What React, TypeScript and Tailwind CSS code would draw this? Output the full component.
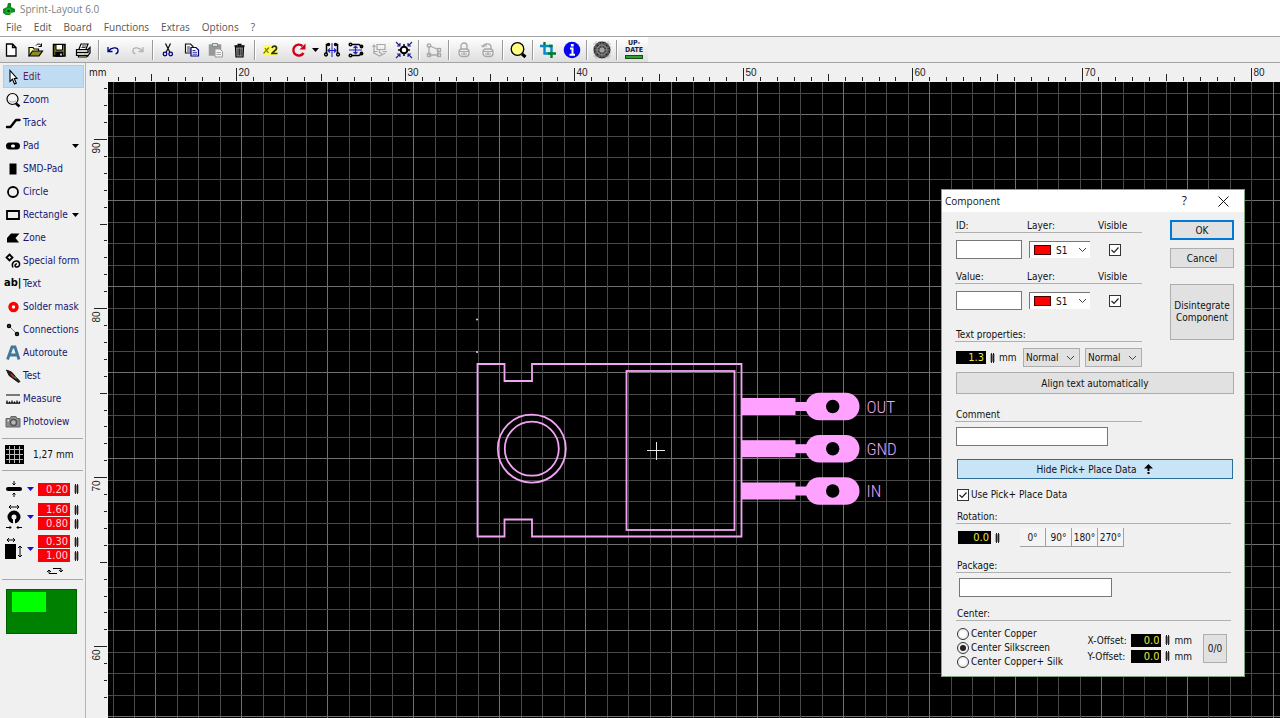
// Board editor shell: menu, toolbar, tool list, rulers, canvas and the
// component dialog floating over it.
import { useEffect, useState, type ReactNode } from "react";

// canvas scale, in pixels
const MM = 16.91;
const GRID = 21.49;

const menus = ["File", "Edit", "Board", "Functions", "Extras", "Options", "?"];

/* ---------- icons ---------- */

function Icon({ children, size = 18 }: { children: ReactNode; size?: number }) {
  return (
    <svg width={size} height={size} viewBox="0 0 18 18" fill="none" stroke="#000" strokeWidth="1.5" className="shrink-0" aria-hidden="true">
      {children}
    </svg>
  );
}

const Down = ({ color = "#000" }: { color?: string }) => (
  <svg width="7" height="4" viewBox="0 0 7 4" className="shrink-0" aria-hidden="true">
    <path d="M0 0h7L3.5 4z" fill={color} />
  </svg>
);

const Chevron = () => (
  <svg width="9" height="6" viewBox="0 0 9 6" fill="none" stroke="#444" className="pointer-events-none shrink-0" aria-hidden="true">
    <path d="M1 1l3.5 3.5L8 1" />
  </svg>
);

const Spin = () => (
  <svg width="5" height="10" viewBox="0 0 5 10" className="shrink-0" aria-hidden="true">
    <rect x="0" y="1" width="5" height="8" fill="#aaa" />
    <rect x="1" y="0" width="1" height="10" fill="#222" />
    <rect x="3" y="0" width="1" height="10" fill="#222" />
    <rect x="2" y="2" width="1" height="6" fill="#777" />
  </svg>
);

type Tool = { name: string; icon: ReactNode; wide?: boolean; drop?: boolean };

const toolbar: Tool[][] = [
  [
    { name: "New", icon: <path d="M3.500 3h6l3.500 3.500V15H3.500zM9.500 3v3.500H13" fill="#fff" strokeWidth="1.300" /> },
    {
      name: "Open",
      icon: (
        <>
          <path d="M2 15V6.500h4l1 1.500h4.500v2.500" fill="#ffff9c" strokeWidth="1.200" />
          <path d="M2 15l3.500-5h10L12 15z" fill="#8c8c20" strokeWidth="1.200" />
          <path d="M9 4.500c1.500-2 4-2 5.500.5m0-2.500V5.500h-3" strokeWidth="1" />
        </>
      ),
    },
    {
      name: "Save",
      icon: (
        <>
          <path d="M2.500 3.500H14V15H2.500z" fill="#7d7d1d" />
          <path d="M5 3.500h6.500V9H5z" fill="#fff" strokeWidth="1" />
          <path d="M5 11.500h6.500V15H5z" fill="#000" />
          <path d="M10 12.500v2" stroke="#fff" />
        </>
      ),
    },
    {
      name: "Print",
      icon: (
        <>
          <path d="M4 8l2-5h7l-2 5" fill="#fff" strokeWidth="1.200" />
          <path d="M7 5h4M6.500 6.500h4" strokeWidth=".8" />
          <path d="M1.500 8.500H13l2-2v5.500l-2 2.500H1.500z" fill="#ccc" strokeWidth="1.200" />
          <path d="M1.500 11.500H13v-3M3.500 14.500v1.500h8l2-1.500" strokeWidth="1.200" />
          <path d="M9 13h2" stroke="#cc0" />
        </>
      ),
    },
  ],
  [
    { name: "Undo", icon: <path d="M3 6v4.500h4.500M3.500 10C6 6.500 12.500 5.500 13 9c.3 2-1 3.500-2.500 4" stroke="#000080" strokeWidth="1.300" /> },
    { name: "Redo", icon: <path d="M14 6v4.500H9.500M13.500 10C11 6.500 4.500 5.500 4 9c-.3 2 1 3.500 2.500 4" stroke="#b4b4b4" strokeWidth="1.300" /> },
  ],
  [
    {
      name: "Cut",
      icon: (
        <>
          <path d="M6.500 2.500l4.500 9M11.500 2.500L7 11.500" stroke="#111" strokeWidth="1.300" />
          <circle cx="6" cy="13" r="1.800" stroke="#000080" strokeWidth="1.300" />
          <circle cx="11.700" cy="13" r="1.800" stroke="#000080" strokeWidth="1.300" />
        </>
      ),
    },
    {
      name: "Copy",
      icon: (
        <>
          <path d="M2.500 3h5l2.500 2.500V12H2.500z" fill="#fff" stroke="#111" strokeWidth="1.200" />
          <path d="M4 6h3M4 8h4M4 10h4" strokeWidth=".8" />
          <path d="M8 6.500h5l2.500 2.500v6H8z" fill="#fff" stroke="#000080" strokeWidth="1.200" />
          <path d="M9.500 9.500h3M9.500 11.300h4.500M9.500 13.200h4.500" stroke="#000080" strokeWidth=".8" />
        </>
      ),
    },
    {
      name: "Paste",
      icon: (
        <>
          <path d="M2.500 4h11v10h-11z" fill="#999" stroke="#999" />
          <path d="M5.500 2.500h5v3h-5z" fill="#ddd" stroke="#888" strokeWidth="1" />
          <path d="M8 8h5l2.500 2.500V16H8z" fill="#f4f4f4" stroke="#999" strokeWidth="1" />
          <path d="M9.500 11.500h4.500M9.500 13.500h4.500" stroke="#999" strokeWidth=".8" />
        </>
      ),
    },
    {
      name: "Delete",
      icon: (
        <>
          <path d="M4.500 6h8L12 16H5z" fill="#999" strokeWidth="1.200" />
          <path d="M3.500 5h10" strokeWidth="1.600" />
          <path d="M6.500 3.500h4" strokeWidth="1.500" />
          <path d="M7 7.500V14.500M8.600 7.500V14.500M10.200 7.500V14.500" strokeWidth=".8" />
        </>
      ),
    },
  ],
  [
    {
      name: "Duplicate",
      wide: true,
      icon: (
        <>
          <rect x="1" y="4" width="15" height="10" fill="#ffff60" stroke="none" />
          <path d="M1.500 12.500L7 6.500M3 7l3.500 5" stroke="#8a7a00" strokeWidth="1.300" />
          <path d="M10 7c.5-2.500 5-2.500 4.500.5-.3 2-3.500 3-4.500 5h5.500" stroke="#303000" strokeWidth="1.700" />
        </>
      ),
    },
    {
      name: "Rotate",
      drop: true,
      icon: (
        <>
          <path d="M13.500 12A5.500 5.500 0 1 1 12.500 5" stroke="#d00018" strokeWidth="2.400" />
          <path d="M9.500 8.500H15.500V2.500z" fill="#d00018" stroke="none" />
        </>
      ),
    },
    {
      name: "Mirror horizontally",
      icon: (
        <>
          <path d="M5.500 3.500H3.500V12M12.500 3.500h2V12" />
          <circle cx="5.500" cy="3.500" r="1" />
          <circle cx="12.500" cy="3.500" r="1" />
          <circle cx="3" cy="13.500" r="1.400" />
          <circle cx="15" cy="13.500" r="1.400" />
          <path d="M9 2v14" stroke="#1c1cc0" strokeWidth="1" />
          <path d="M5.500 9.500h7M7 7.500l-2 2 2 2M11 7.500l2 2-2 2" stroke="#1c1cc0" strokeWidth="1.200" />
        </>
      ),
    },
    {
      name: "Mirror vertically",
      icon: (
        <>
          <path d="M4 3.500h8l2 1.500v1M4 14.500h8l2-1.500v-1" />
          <circle cx="3.500" cy="3.500" r="1.300" />
          <circle cx="3.500" cy="14.500" r="1.300" />
          <circle cx="14.500" cy="5.500" r="1.200" />
          <circle cx="14.500" cy="12.500" r="1.200" />
          <path d="M2 9h13" stroke="#1c1cc0" strokeWidth="1" />
          <path d="M8.500 5.500v7M6.500 7l2-1.800 2 1.800M6.500 11l2 1.800 2-1.800" stroke="#1c1cc0" strokeWidth="1.200" />
        </>
      ),
    },
    {
      name: "Align",
      icon: (
        <g stroke="#a8a8a8" strokeWidth="1.200">
          <path d="M6 3.500h8v5H6zM3 4v9M1.500 6L3 4l1.500 2" />
          <path d="M2 10.500h4.500M16 10.500h-4.500M3 12l5.500 3 6-3M8.500 8.500v3l2.500 1.500" />
        </g>
      ),
    },
    {
      name: "Snap to center",
      icon: (
        <>
          <circle cx="9" cy="9" r="3.300" fill="#fff" strokeWidth="2" />
          <path
            d="M1 1l4 4M5 2v3H2M17 1l-4 4M13 2v3h3M1 17l4-4M2 13h3v3M17 17l-4-4M16 13h-3v3"
            stroke="#1c1c90"
            strokeWidth="1.100"
          />
          <path d="M9 3v2M9 13v2M3 9h2M13 9h2" />
        </>
      ),
    },
  ],
  [
    {
      name: "Component",
      icon: (
        <g stroke="#a8a8a8" strokeWidth="1.300">
          <path d="M4 5v9M4 14h10M5 5l8 3.500M13 9v4" />
          <circle cx="4" cy="4.500" r="1.700" />
          <rect x="2.500" y="12.500" width="3" height="3" />
          <rect x="12.500" y="7.500" width="3" height="3" />
          <rect x="12.500" y="12.500" width="3" height="3" />
        </g>
      ),
    },
  ],
  [
    {
      name: "Lock",
      icon: (
        <g stroke="#a8a8a8" strokeWidth="1.300">
          <path d="M6 8V5a3 3 0 0 1 6 0V8" />
          <rect x="4" y="8" width="10" height="7.500" rx="3" />
          <path d="M4 10.500h10M6 13h6M9 10v4" strokeWidth="1" />
        </g>
      ),
    },
    {
      name: "Unlock",
      icon: (
        <g stroke="#a8a8a8" strokeWidth="1.300">
          <path d="M4 6.500c0-4 7-5 8-1V8" />
          <rect x="4" y="8" width="10" height="7.500" rx="3" />
          <path d="M4 10.500h10M6 13h6M9 10v4M2 5h6" strokeWidth="1" />
        </g>
      ),
    },
  ],
  [
    {
      name: "Zoom",
      icon: (
        <>
          <circle cx="8.500" cy="8" r="6.300" fill="#ffff80" strokeWidth="1.300" />
          <path d="M13 13l3.500 3" strokeWidth="3" />
        </>
      ),
    },
  ],
  [
    {
      name: "Crop",
      icon: (
        <>
          <path d="M1 5h11.500v6" stroke="#008cc8" strokeWidth="2.400" />
          <path d="M5.500 4v8.500H12" stroke="#008cc8" strokeWidth="2.400" />
          <path d="M5.500 1v3M12.500 11v6M9 12.500h8M10 5h3.500" stroke="#007c2c" strokeWidth="2.400" />
        </>
      ),
    },
    {
      name: "Info",
      icon: (
        <>
          <circle cx="9" cy="9" r="8.300" fill="#0606ee" stroke="none" />
          <path d="M9.300 3v2.500" stroke="#fff" strokeWidth="2.800" />
          <path d="M7 7.500h2.500v6M6.500 13.800h5.500" stroke="#fff" strokeWidth="2" />
        </>
      ),
    },
  ],
  [
    {
      name: "Ground plane",
      icon: (
        <>
          <circle cx="9" cy="9" r="8.500" fill="#222" stroke="none" strokeDasharray="2 1" />
          <circle cx="9" cy="9" r="5" stroke="#999" strokeWidth="1" />
          <circle cx="9" cy="9" r="2.500" fill="#aaa" stroke="none" />
          <path d="M3 0v18M6 0v18M9 0v18M12 0v18M15 0v18M0 3h18M0 6h18M0 9h18M0 12h18M0 15h18" stroke="#999" strokeWidth=".6" />
        </>
      ),
    },
  ],
];

const tools: Tool[] = [
  { name: "Edit", icon: <path d="M6 2.500v11l2.500-2.300 2 4.800 1.800-.8-2-4.700H13z" fill="#fff" strokeWidth="1.100" /> },
  {
    name: "Zoom",
    icon: (
      <>
        <circle cx="8.500" cy="8" r="5.500" fill="#f6f6f6" strokeWidth="1.200" />
        <path d="M5 9.500c2 2 5 2 7 0" stroke="#888" strokeWidth=".8" />
        <path d="M12 12.500l3.500 3" strokeWidth="2.500" />
      </>
    ),
  },
  { name: "Track", icon: <path d="M3 13h3.500l5.500-7h3.500" strokeWidth="2.400" strokeLinecap="round" strokeLinejoin="round" /> },
  {
    name: "Pad",
    drop: true,
    icon: (
      <>
        <rect x="2" y="5.500" width="14" height="7" rx="3.500" fill="#000" stroke="none" />
        <rect x="7" y="7.500" width="4" height="3" rx="1.500" fill="#fff" stroke="none" />
      </>
    ),
  },
  { name: "SMD-Pad", icon: <path d="M5.500 3.500h7v11h-7z" fill="#000" stroke="none" /> },
  { name: "Circle", icon: <circle cx="9" cy="9" r="5" strokeWidth="1.800" /> },
  { name: "Rectangle", drop: true, icon: <path d="M3 5h12v8H3z" strokeWidth="1.800" /> },
  { name: "Zone", icon: <path d="M3 13.500V9l4-4.500h8.500L11.500 9l3.500 4.500z" fill="#000" stroke="none" /> },
  {
    name: "Special form",
    icon: (
      <>
        <path d="M5.500 2.500l3 3-3 3-3-3z" strokeWidth="1.800" />
        <path d="M9 15.500c-2-4 1-7 4-6.500 4 1 3 6.500-.5 6-2.500-.5-1.500-3.500.5-3" strokeWidth="1.500" />
      </>
    ),
  },
  { name: "Text", icon: null },
  {
    name: "Solder mask",
    icon: (
      <>
        <circle cx="9.500" cy="9" r="5.200" fill="#f00" stroke="none" />
        <circle cx="9.500" cy="9" r="1.700" fill="#fff" stroke="none" />
      </>
    ),
  },
  {
    name: "Connections",
    icon: (
      <>
        <path d="M5 5l8 8" stroke="#666" strokeWidth=".8" />
        <circle cx="5" cy="5" r="1.400" strokeWidth="1.700" />
        <circle cx="13" cy="13" r="1.400" strokeWidth="1.700" />
      </>
    ),
  },
  {
    name: "Autoroute",
    icon: <path d="M3.500 15.500L8 3h3l4 12.500M5.500 11h7.500" stroke="#41779a" strokeWidth="2.800" />,
  },
  {
    name: "Test",
    icon: (
      <>
        <path d="M2.500 3l5 2 8.500 9.500-1.500 1-9.500-7z" fill="#222" strokeWidth=".8" />
        <path d="M7 7l3 3.500" stroke="#d02020" strokeWidth="1.800" />
        <path d="M10.500 9.500l2 2" stroke="#3c9a50" />
      </>
    ),
  },
  { name: "Measure", icon: <path d="M2 5h14M2 13.200h14M3 10.500v3M5.500 11.500v2M8 10.500v3M10.500 11.500v2M13 10.500v3M15.500 11.500v2" strokeWidth="1.200" /> },
  {
    name: "Photoview",
    icon: (
      <>
        <path d="M2 5.500h4l1-2h5l1 2h3V14H2z" fill="#8c8c8c" stroke="#666" strokeWidth="1" />
        <circle cx="9.500" cy="9.500" r="3" fill="#b8b8c4" stroke="#555" />
        <path d="M3.500 7.500h1.500" stroke="#eee" />
      </>
    ),
  },
];

/* ---------- window chrome ---------- */

function Toolbar() {
  return (
    <div className="border-y border-[#a3a3a3] bg-[#f0f0f0]">
      <div className="flex h-[25px] w-max items-center bg-linear-to-b from-white to-[#dedede]">
        {toolbar.map((group) => (
          <div key={group[0].name} className="flex items-center">
            {group.map((t) => (
              <button
                key={t.name}
                type="button"
                aria-label={t.name}
                className={`flex h-6 items-center justify-center ${t.wide ? "w-[26px]" : t.drop ? "w-9 gap-1 pl-1" : "w-6"}`}
              >
                <Icon>{t.icon}</Icon>
                {t.drop && <Down />}
              </button>
            ))}
            <span className="mx-[2px] h-5 w-[2px] border-l border-[#999] bg-white" />
          </div>
        ))}
        <button type="button" className="flex w-7 flex-col items-center text-[7px] leading-[7px] font-bold text-[#202040]">
          <span>UP-</span>
          <span>DATE</span>
          <span className="mt-px h-1 w-[18px] border border-[#184818] bg-[#30a030]" />
        </button>
      </div>
    </div>
  );
}

function RedField({ label, value }: { label: string; value: string }) {
  return (
    <div className="flex items-center gap-1">
      <input
        aria-label={label}
        defaultValue={value}
        className="h-[13px] w-8 bg-[#f80008] pr-[2px] text-right text-[11px] leading-3 text-[#ffd8d8]"
      />
      <Spin />
    </div>
  );
}

function ToolPanel() {
  const [active, setActive] = useState("Edit");
  return (
    <aside className="flex w-[86px] shrink-0 flex-col border-r border-[#b4b4b4] pt-[2px]">
      {tools.map((t) => (
        <button
          key={t.name}
          type="button"
          onClick={() => setActive(t.name)}
          className={`mr-px ml-[3px] flex h-[23px] items-center border pr-1 text-left ${
            active === t.name ? "border-[#a9cfea] bg-[#bfdcf3] text-[#602048]" : "border-transparent text-[#151570]"
          }`}
        >
          {t.icon ? (
            <Icon>{t.icon}</Icon>
          ) : (
            <span className="w-[18px] text-[11px] font-bold text-black" aria-hidden="true">
              ab|
            </span>
          )}
          <span className="ml-px flex-1 whitespace-nowrap">{t.name}</span>
          {t.drop && <Down />}
        </button>
      ))}
      <div className="mx-[2px] mt-[5px] flex h-[33px] items-center gap-[9px] border-y border-[#a8a8a8] pl-[3px]">
        <svg width="19" height="19" viewBox="0 0 19 19" aria-hidden="true">
          <rect width="19" height="19" fill="#000" />
          <path d="M4.500 1v17M9.500 1v17M14.500 1v17M1 4.500h17M1 9.500h17M1 14.500h17" stroke="#bbb" />
        </svg>
        <span className="text-[#111]">1,27 mm</span>
      </div>
      <div className="mx-[2px] flex flex-col gap-[5px] border-b border-[#a8a8a8] pt-[9px] pb-1">
        <div className="flex items-center justify-between pr-1 pl-[3px]">
          <Icon>
            <path d="M3 9h12" strokeWidth="4" strokeLinecap="round" />
            <path d="M9 1v4M7.500 3.500L9 5l1.500-1.500M9 17v-4M7.500 14.500L9 13l1.500 1.500" strokeWidth="1" />
          </Icon>
          <Down color="#1010d0" />
          <RedField label="Track width" value="0.20" />
        </div>
        <div className="flex items-center justify-between pr-1 pl-[3px]">
          <svg width="18" height="26" viewBox="0 0 18 26" fill="none" stroke="#000" aria-hidden="true">
            <path d="M4 3h10M6 1L4 3l2 2M12 1l2 2-2 2" />
            <circle cx="9" cy="13" r="4.500" strokeWidth="4" />
            <path d="M9 13v7" stroke="#f0f0f0" strokeWidth="2" />
            <path d="M1 23.500h5M4.500 22L6 23.500 4.500 25M17 23.500h-5M13.500 22L12 23.500l1.500 1.500" />
          </svg>
          <Down color="#1010d0" />
          <div className="flex flex-col gap-px">
            <RedField label="Pad diameter" value="1.60" />
            <RedField label="Drill diameter" value="0.80" />
          </div>
        </div>
        <div className="flex items-center justify-between pr-1 pl-[3px]">
          <svg width="18" height="24" viewBox="0 0 18 24" fill="none" stroke="#000" aria-hidden="true">
            <path d="M2 3h8M4 1L2 3l2 2M8 1l2 2-2 2" />
            <rect x="0" y="7" width="11" height="15" fill="#000" stroke="none" />
            <path d="M15 9v11M13 11l2-2 2 2M13 18l2 2 2-2" />
          </svg>
          <Down color="#1010d0" />
          <div className="flex flex-col gap-px">
            <RedField label="SMD width" value="0.30" />
            <RedField label="SMD height" value="1.00" />
          </div>
        </div>
        <button type="button" aria-label="Swap width and height" className="ml-[44px] w-[18px]">
          <svg width="18" height="8" viewBox="0 0 18 8" fill="none" stroke="#000" aria-hidden="true">
            <path d="M7 1.500h8v3M13 3l2 2 2-2M11 6.500H3v-3M1 5l2-2 2 2" />
          </svg>
        </button>
      </div>
      <div className="mx-[6px] mt-[9px] h-[45px] w-[71px] border border-[#006000] bg-[#008000] px-[5px] pt-[2px]">
        <div className="h-5 w-[34px] bg-[#00ff00]" />
      </div>
    </aside>
  );
}

/* ---------- rulers and canvas ---------- */

const ticks = Array.from({ length: 160 }, (_, i) => i);

function useWindowSize() {
  const [size, setSize] = useState({ w: window.innerWidth, h: window.innerHeight });
  useEffect(() => {
    const update = () => setSize({ w: window.innerWidth, h: window.innerHeight });
    window.addEventListener("resize", update);
    return () => window.removeEventListener("resize", update);
  }, []);
  return size;
}

function TopRuler() {
  // first visible tick is 13 mm
  const { w } = useWindowSize();
  const count = Math.floor((w - 118) / MM);
  return (
    <svg className="h-full w-full font-['Liberation_Sans',sans-serif] text-[10px]" aria-label="Horizontal ruler">
      {Array.from({ length: count }, (_, i) => {
        const mm = 13 + i;
        const x = Math.round(128 + (mm - 20) * MM) + 0.5;
        const len = mm % 10 === 0 ? 13 : mm % 5 === 0 ? 7 : 4;
        return (
          <g key={mm}>
            <path d={`M${x} 18V${18 - len}`} stroke="#222" />
            {mm % 10 === 0 && (
              <text x={x + 2} y="13" fill="#222">
                {mm}
              </text>
            )}
          </g>
        );
      })}
    </svg>
  );
}

function SideRuler() {
  const { h } = useWindowSize();
  const count = Math.min(93, Math.floor((h - 85) / MM));
  return (
    <svg className="h-full w-full font-['Liberation_Sans',sans-serif] text-[10px]" aria-label="Vertical ruler">
      {Array.from({ length: count }, (_, i) => {
        const mm = 93 - i;
        const y = Math.round(57 + (90 - mm) * MM) + 0.5;
        const len = mm % 10 === 0 ? 13 : mm % 5 === 0 ? 7 : 3;
        return (
          <g key={mm}>
            <path d={`M21 ${y}h-${len}`} stroke="#222" />
            {mm % 10 === 0 && (
              <text transform={`translate(14 ${y + 14}) rotate(-90)`} fill="#222">
                {mm}
              </text>
            )}
          </g>
        );
      })}
    </svg>
  );
}

const pins = [
  { name: "OUT", y: 42.5 },
  { name: "GND", y: 84.700 },
  { name: "IN", y: 127 },
];

function Board() {
  return (
    <svg className="absolute inset-0 h-full w-full" aria-label="Board">
      {ticks.map((i) => {
        const x = Math.round(4.500 + i * GRID) + 0.5;
        const y = Math.round(11 + i * GRID) + 0.5;
        return (
          <g key={i}>
            <path d={`M${x} 0V3000`} stroke={i % 4 === 2 ? "#707070" : "#484848"} />
            <path d={`M0 ${y}H4000`} stroke={i % 4 === 1 ? "#707070" : "#484848"} />
          </g>
        );
      })}
      <circle cx="369" cy="237.500" r="1" fill="#ddd" />
      <circle cx="369" cy="270" r="1" fill="#ddd" />
      <g transform="translate(369.500 282)" stroke="#f3a4f3" strokeWidth="1.800" fill="none">
        <path d="M0 0h27v17h27.500V0H264v172.500H54.500v-17H27v17H0z" />
        <rect x="149" y="7" width="108" height="159" />
        <circle cx="54.300" cy="84.700" r="34" />
        <circle cx="54.300" cy="84.700" r="27" />
        {pins.map((p) => (
          <g key={p.name} stroke="none" fill="#ffa2ff">
            <rect x="264" y={p.y - 8.500} width="54" height="17" />
            <rect x="317" y={p.y - 4.500} width="15" height="9" />
            <rect x="328" y={p.y - 13.700} width="54" height="27.400" rx="13.700" />
            <circle cx="355.200" cy={p.y} r="6.700" fill="#000" />
            <text x="389" y={p.y + 6} fill="#f3a4f3" className="font-['Liberation_Sans_Narrow','Roboto_Condensed',Roboto,sans-serif] text-[17px] font-light">
              {p.name}
            </text>
          </g>
        ))}
      </g>
      <path d="M539 368.500h18M548.500 360v18" stroke="#e8e8e8" />
    </svg>
  );
}

/* ---------- dialog ---------- */

const box = "h-[19px] border border-[#777] bg-white px-1";
const push = "flex items-center justify-center border border-[#adadad] bg-[#e1e1e1]";
const heading = "h-4 border-b border-[#b0b0b0] pl-px leading-[17px]";

function NumField({ id, label, value, wide }: { id: string; label?: string; value: string; wide?: boolean }) {
  return (
    <span className="flex items-center gap-1">
      <input
        id={id}
        aria-label={label}
        defaultValue={value}
        className={`h-[13px] bg-black pr-[2px] text-right text-[11px] leading-3 text-[#e8e840] ${wide ? "w-[33px]" : "w-[30px]"}`}
      />
      <Spin />
    </span>
  );
}

function Check({ id, label }: { id: string; label?: string }) {
  return (
    <span className="grid size-3 shrink-0 place-items-center">
      <input
        id={id}
        type="checkbox"
        defaultChecked
        aria-label={label}
        className="peer col-start-1 row-start-1 size-3 appearance-none border border-[#333] bg-white"
      />
      <svg viewBox="0 0 12 12" className="pointer-events-none col-start-1 row-start-1 hidden size-3 peer-checked:block" fill="none" stroke="#222" strokeWidth="1.200" aria-hidden="true">
        <path d="M2.500 6l2.500 2.500 4.500-5" />
      </svg>
    </span>
  );
}

function FieldRow({ name }: { name: string }) {
  const id = name.toLowerCase();
  return (
    <div className="w-[187px]">
      <div className={`flex ${heading}`}>
        <label htmlFor={id} className="w-[71px]">{name}:</label>
        <label htmlFor={`${id}-layer`} className="w-[71px]">Layer:</label>
        <label htmlFor={`${id}-visible`}>Visible</label>
      </div>
      <div className="mt-[7px] flex items-center pl-px">
        <input id={id} className={`${box} w-[66px]`} />
        <div className="ml-[7px] flex h-[17px] w-[61px] items-center border-t border-l border-[#777] bg-white pr-[3px] pl-1">
          <span className="h-[10px] w-[17px] border border-[#400] bg-[#f00]" />
          <select id={`${id}-layer`} className="ml-[5px] min-w-0 flex-1 appearance-none bg-transparent">
            <option>S1</option>
            <option>S2</option>
          </select>
          <Chevron />
        </div>
        <span className="ml-[19px] flex">
          <Check id={`${id}-visible`} />
        </span>
      </div>
    </div>
  );
}

function StyleSelect({ label }: { label: string }) {
  return (
    <div className="flex h-[19px] w-[57px] items-center border border-[#adadad] bg-[#e1e1e1] pr-1 pl-[2px]">
      <select aria-label={label} className="min-w-0 flex-1 appearance-none bg-transparent">
        <option>Normal</option>
        <option>Bold</option>
      </select>
      <Chevron />
    </div>
  );
}

function ComponentDialog() {
  const [open, setOpen] = useState(true);
  const [center, setCenter] = useState("Center Silkscreen");
  if (!open) return null;

  return (
    <section
      role="dialog"
      aria-labelledby="dialog-title"
      className="absolute top-[107px] right-[35px] w-[304px] border border-[#7da67d] bg-[#f0f0f0] text-[#111]"
    >
      <header className="flex h-[22px] items-center bg-white pr-[15px] pl-[3px] font-['Open_Sans',sans-serif] text-[10px]">
        <h2 id="dialog-title" className="flex-1">Component</h2>
        <button type="button" aria-label="Help" className="mr-[31px] text-[12px]">?</button>
        <button type="button" aria-label="Close" onClick={() => setOpen(false)}>
          <svg width="11" height="11" viewBox="0 0 11 11" stroke="#111" aria-hidden="true">
            <path d="M.5.5l10 10M10.500.5l-10 10" />
          </svg>
        </button>
      </header>

      <div className="flex flex-col pt-[5px] pr-[10px] pb-[8px] pl-[13px]">
        <div className="flex items-start justify-between">
          <div className="flex flex-col">
            <FieldRow name="ID" />
            <div className="h-[9px]" />
            <FieldRow name="Value" />
            <h3 className={`mt-4 ${heading}`}>Text properties:</h3>
            <div className="mt-[6px] flex items-center pl-px">
              <NumField id="text-height" label="Text height" value="1.3" />
              <span className="ml-1">mm</span>
              <div className="ml-auto flex gap-[5px]">
                <StyleSelect label="Text width" />
                <StyleSelect label="Text style" />
              </div>
            </div>
          </div>
          <div className="flex w-16 flex-col gap-2 pt-[3px]">
            <button type="button" className="h-5 border-2 border-[#0078d7] bg-[#e1e1e1]">OK</button>
            <button type="button" className={`${push} h-5`}>Cancel</button>
            <button type="button" className={`${push} mt-2 h-14 leading-3`}>
              Disintegrate
              <br />
              Component
            </button>
          </div>
        </div>

        <button type="button" className={`${push} mt-[5px] ml-px h-[22px]`}>Align text automatically</button>

        <label htmlFor="comment" className={`mt-3 w-[187px] ${heading}`}>Comment</label>
        <input id="comment" className={`${box} mt-[5px] ml-px w-[152px]`} />

        <button type="button" className="mt-[13px] ml-[2px] mr-px flex h-5 items-center justify-center gap-2 border border-[#2c6e98] bg-[#c9e3f7]">
          Hide Pick+ Place Data
          <svg width="9" height="10" viewBox="0 0 9 10" aria-hidden="true">
            <path d="M4.500 0L9 4.500H5.500V7h-2V4.500H0zM3.500 8h2v2h-2z" />
          </svg>
        </button>

        <div className="mt-[10px] flex items-center gap-[2px] pl-[2px]">
          <Check id="use-data" />
          <label htmlFor="use-data" className="leading-3">Use Pick+ Place Data</label>
        </div>

        <div className="mr-[3px] ml-px">
          <label htmlFor="rotation" className={`mt-[7px] flex ${heading}`}>Rotation:</label>
          <div className="mt-1 flex items-center pl-[2px]">
            <NumField id="rotation" value="0.0" wide />
            <div className="ml-5 flex">
              {["0°", "90°", "180°", "270°"].map((a) => (
                <button key={a} type="button" className="h-[19px] w-[26px] border-r border-b border-[#a0a0a0] bg-[#f4f4f4]">
                  {a}
                </button>
              ))}
            </div>
          </div>

          <label htmlFor="package" className={`mt-[10px] flex ${heading}`}>Package:</label>
          <input id="package" className={`${box} mt-[5px] ml-[3px] block w-[153px]`} />

          <h3 className={`mt-2 ${heading}`}>Center:</h3>
          <div className="mt-[7px] flex items-center pr-1 pl-px">
            <div className="flex flex-1 flex-col gap-[2px]">
              {["Center Copper", "Center Silkscreen", "Center Copper+ Silk"].map((c) => (
                <label key={c} className="flex items-center gap-[2px] leading-3 whitespace-nowrap">
                  <input
                    type="radio"
                    name="center"
                    checked={center === c}
                    onChange={() => setCenter(c)}
                    className="size-3 appearance-none rounded-full border border-[#333] bg-white bg-clip-content p-[2px] checked:bg-[#222]"
                  />
                  {c}
                </label>
              ))}
            </div>
            <div className="flex flex-col gap-[3px]">
              {["X", "Y"].map((axis) => (
                <div key={axis} className="flex h-[13px] items-center">
                  <label htmlFor={`offset-${axis}`} className="w-11 whitespace-nowrap">{axis}-Offset:</label>
                  <NumField id={`offset-${axis}`} value="0.0" />
                  <span className="ml-1">mm</span>
                </div>
              ))}
            </div>
            <button type="button" className={`${push} ml-[11px] h-[29px] w-6`}>0/0</button>
          </div>
        </div>
      </div>
    </section>
  );
}

export default function App() {
  return (
    <div className="flex h-screen flex-col overflow-hidden bg-[#f0f0f0] font-['DejaVu_Sans_Condensed','DejaVu_Sans',sans-serif] text-[10px]">
      <div className="bg-white font-['Open_Sans',sans-serif] text-[10px] text-[#555]">
        <div className="flex h-[18px] items-center gap-1 pl-[3px] text-[#808080]">
          <svg width="13" height="14" viewBox="0 0 13 14" aria-hidden="true">
            <path d="M5 1h3v4l4 2v3l-4 1-1 2H3L0 11V7l4-2z" fill="#0c8c1c" />
            <circle cx="5.500" cy="9" r="3" fill="#20b030" />
            <circle cx="5.500" cy="9" r="1.300" fill="#043c0c" />
          </svg>
          <h1>Sprint-Layout 6.0</h1>
        </div>
        <nav className="flex h-[18px] items-center">
          {menus.map((m) => (
            <button key={m} type="button" className="px-[6px]">
              {m}
            </button>
          ))}
        </nav>
      </div>
      <Toolbar />
      <div className="flex min-h-0 flex-1">
        <ToolPanel />
        <main className="grid min-w-0 flex-1 grid-cols-[22px_1fr] grid-rows-[19px_1fr]">
          <span className="pl-[3px] leading-[19px] text-[#111]">mm</span>
          <TopRuler />
          <SideRuler />
          <div className="relative overflow-hidden bg-black">
            <Board />
            <ComponentDialog />
          </div>
        </main>
      </div>
    </div>
  );
}
